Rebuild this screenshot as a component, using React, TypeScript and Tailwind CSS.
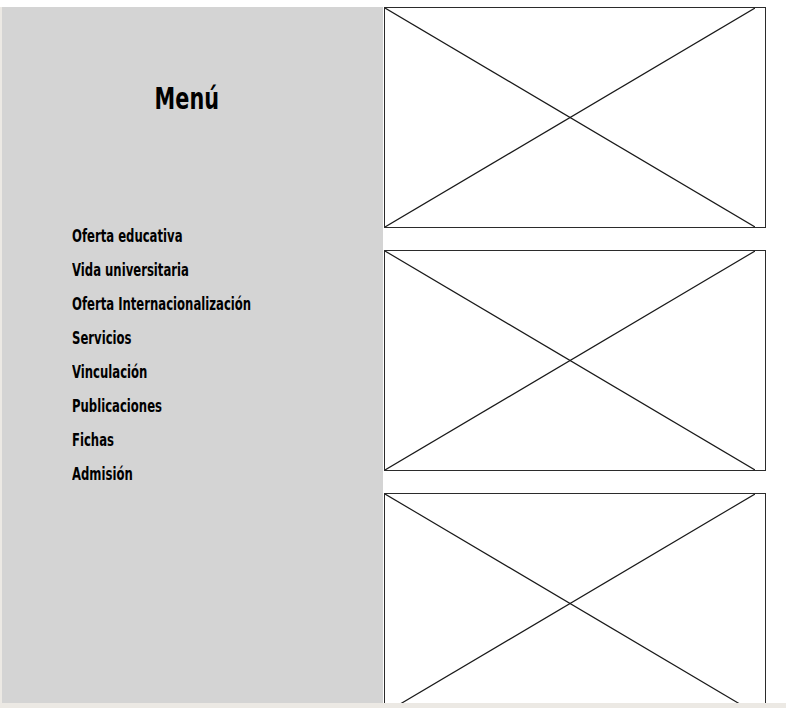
const items = [
  'Oferta educativa',
  'Vida universitaria',
  'Oferta Internacionalización',
  'Servicios',
  'Vinculación',
  'Publicaciones',
  'Fichas',
  'Admisión',
]

function Placeholder() {
  return (
    <div className="h-[221px] w-[382px] shrink-0 border border-[#2b2b2b] bg-white">
      <svg width="370" height="219" viewBox="0 0 370 219" preserveAspectRatio="none" className="block">
        <line x1="0" y1="0" x2="370" y2="219" stroke="#1a1a1a" strokeWidth="1.2" />
        <line x1="370" y1="0" x2="0" y2="219" stroke="#1a1a1a" strokeWidth="1.2" />
      </svg>
    </div>
  )
}

export default function App() {
  return (
    <div className="w-[786px] h-[708px] overflow-hidden bg-white flex flex-col">
      <div className="flex h-[703px] pt-[7px] shrink-0 overflow-hidden">
        <div className="w-[2px] bg-[#ece9e4] shrink-0" />
        <aside
          className="w-[381px] shrink-0 bg-[#d4d4d4] text-black"
          style={{ fontFamily: '"DejaVu Sans Condensed", "DejaVu Sans", sans-serif' }}
        >
          <h1 className="mt-[77px] pr-[12px] text-center text-[30px] font-bold leading-none">
            <span className="inline-block scale-x-[0.77]">Menú</span>
          </h1>
          <ul className="mt-[111px] pl-[70px] flex flex-col">
            {items.map(i => (
              <li key={i} className="h-[34px] text-[18px] font-bold leading-[22px]">
                <span className="inline-block origin-left scale-x-[0.72]">{i}</span>
              </li>
            ))}
          </ul>
        </aside>
        <div className="ml-[1px] flex flex-col gap-[22px]">
          <Placeholder />
          <Placeholder />
          <Placeholder />
        </div>
      </div>
      <div className="h-[5px] bg-[#ece9e4]" />
    </div>
  )
}
